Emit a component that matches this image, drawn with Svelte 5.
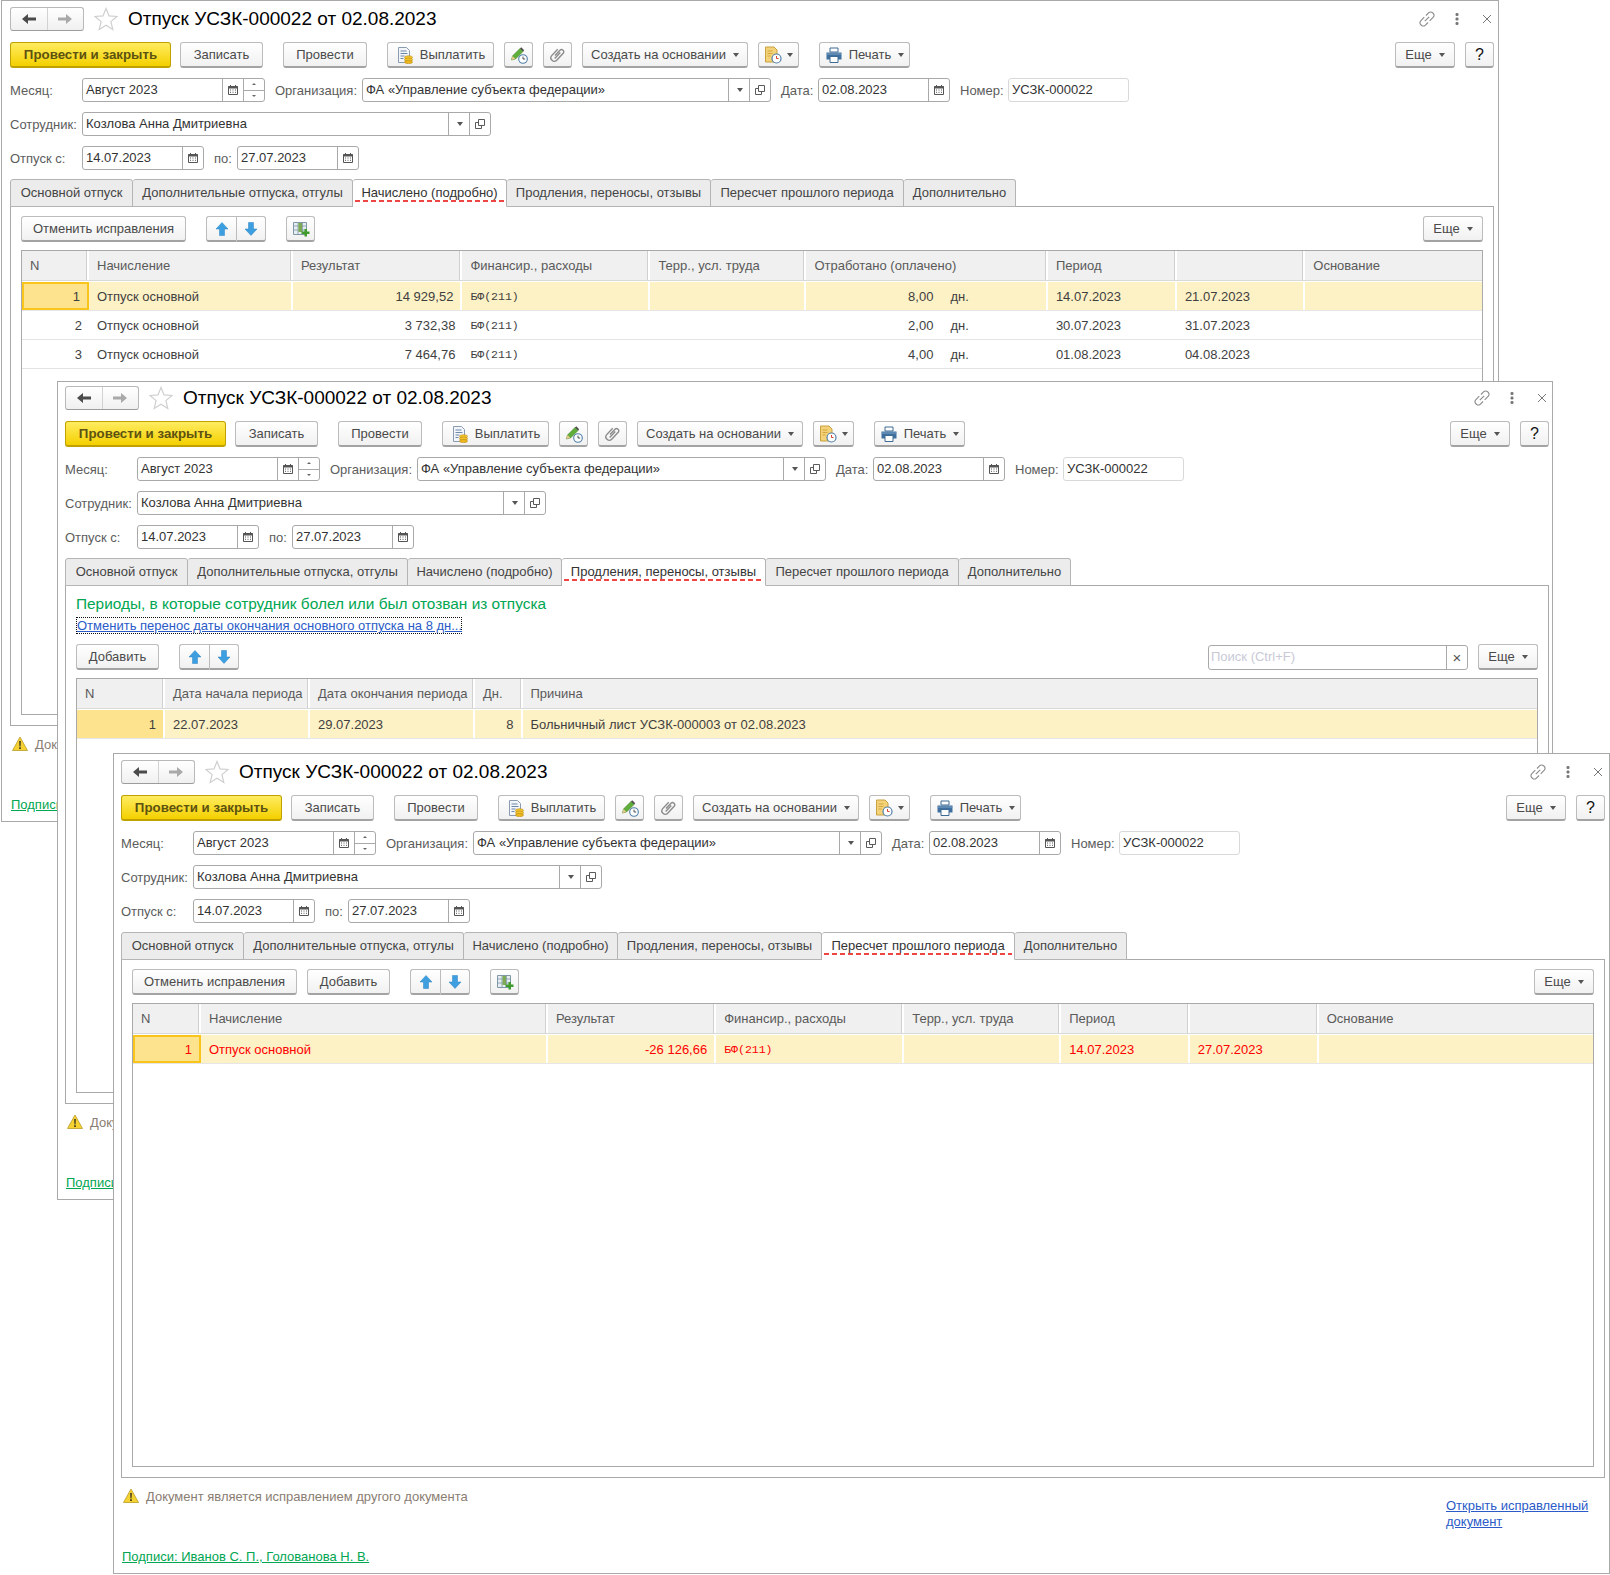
<script>
  const tabs = [
    ["Основной отпуск", 123],
    ["Дополнительные отпуска, отгулы", 220],
    ["Начислено (подробно)", 154],
    ["Продления, переносы, отзывы", 204],
    ["Пересчет прошлого периода", 193],
    ["Дополнительно", 112],
  ];

  const accrualAlign = ["r", "l", "r", "m", "l", "u", "l", "l", "l"];
  const accrualHead = ["N", "Начисление", "Результат", "Финансир., расходы", "Терр., усл. труда", "Отработано (оплачено)", "Период", "", "Основание"];
  const accrualRows = [
    ["1", "Отпуск основной", "14 929,52", "БФ(211)", "", "8,00|дн.", "14.07.2023", "21.07.2023", ""],
    ["2", "Отпуск основной", "3 732,38", "БФ(211)", "", "2,00|дн.", "30.07.2023", "31.07.2023", ""],
    ["3", "Отпуск основной", "7 464,76", "БФ(211)", "", "4,00|дн.", "01.08.2023", "04.08.2023", ""],
  ];

  const periodAlign = ["r", "l", "l", "r", "l"];
  const periodHead = ["N", "Дата начала периода", "Дата окончания периода", "Дн.", "Причина"];
  const periodRows = [["1", "22.07.2023", "29.07.2023", "8", "Больничный лист УСЗК-000003 от 02.08.2023"]];

  const recalcAlign = ["r", "l", "r", "m", "l", "l", "l", "l"];
  const recalcHead = ["N", "Начисление", "Результат", "Финансир., расходы", "Терр., усл. труда", "Период", "", "Основание"];
  const recalcRows = [["1", "Отпуск основной", "-26 126,66", "БФ(211)", "", "14.07.2023", "27.07.2023", ""]];
</script>

{#snippet icon(name, cls = "")}
  <svg class="ic {cls}"><use href="#{name}" /></svg>
{/snippet}

{#snippet caret()}
  <i class="caret"></i>
{/snippet}

{#snippet field(text, cls, buttons = [])}
  <div class="field {cls}">
    <span class="val">{text}</span>
    {#each buttons as b}
      <span class="fbtn">
        {#if b === "cal"}
          {@render icon("i-cal", "s12")}
        {:else if b === "drop"}
          {@render caret()}
        {:else if b === "open"}
          {@render icon("i-open", "s12")}
        {:else if b === "clear"}
          <span class="x">×</span>
        {:else if b === "spin"}
          <span class="spin"><i class="up"></i><i class="dn"></i></span>
        {/if}
      </span>
    {/each}
  </div>
{/snippet}

{#snippet arrows()}
  <div class="btn-pair">
    <button class="btn ib w30">{@render icon("i-up", "s16")}</button>
    <button class="btn ib w30">{@render icon("i-down", "s16")}</button>
  </div>
{/snippet}

{#snippet table(kind, head, rows, align, focus, red = false)}
  <div class="table {kind}" class:red>
    <div class="tr th">
      {#each head as h}
        <div class="cell">{h}</div>
      {/each}
    </div>
    {#each rows as row, ri}
      <div class="tr" class:sel={ri === 0}>
        {#each row as c, ci}
          <div class="cell {align[ci]}" class:num={ci === 0} class:focus={focus && ri === 0 && ci === 0}>
            {#if align[ci] === "u"}
              <span class="qty">{c.split("|")[0]}</span><span class="unit">{c.split("|")[1]}</span>
            {:else}
              {c}
            {/if}
          </div>
        {/each}
      </div>
    {/each}
  </div>
{/snippet}

{#snippet shell(winClass, active, body)}
  <section class="win {winClass}">
    <header class="head">
      <div class="nav">
        <button class="navb">{@render icon("i-back", "s18")}</button>
        <button class="navb">{@render icon("i-fwd", "s18")}</button>
      </div>
      {@render icon("i-star", "star")}
      <h1>Отпуск УСЗК-000022 от 02.08.2023</h1>
      <div class="wctl">
        {@render icon("i-link", "s18")}
        {@render icon("i-dots", "s18")}
        {@render icon("i-close", "s18")}
      </div>
    </header>

    <div class="bar top">
      <div class="grp tight">
        <button class="btn primary b161">Провести и закрыть</button>
        <button class="btn b83">Записать</button>
      </div>
      <button class="btn b84">Провести</button>
      <div class="grp">
        <button class="btn b107">{@render icon("i-pay", "s18")}Выплатить</button>
        <button class="btn ib w29">{@render icon("i-pen", "s18")}</button>
        <button class="btn ib w29">{@render icon("i-clip", "s18")}</button>
        <button class="btn b166">Создать на основании{@render caret()}</button>
        <button class="btn ib b41">{@render icon("i-docclock", "s18")}{@render caret()}</button>
      </div>
      <button class="btn b90">{@render icon("i-print", "s18")}Печать{@render caret()}</button>
      <div class="grp end">
        <button class="btn b60">Еще{@render caret()}</button>
        <button class="btn ib w29 help">?</button>
      </div>
    </div>

    <div class="row">
      <span class="lb l72">Месяц:</span>
      {@render field("Август 2023", "f183", ["cal", "spin"])}
      <span class="lb l86 ml">Организация:</span>
      {@render field("ФА «Управление субъекта федерации»", "f409", ["drop", "open"])}
      <span class="lb l37 ml">Дата:</span>
      {@render field("02.08.2023", "f132", ["cal"])}
      <span class="lb l48 ml">Номер:</span>
      {@render field("УСЗК-000022", "f120 light")}
    </div>
    <div class="row">
      <span class="lb l72">Сотрудник:</span>
      {@render field("Козлова Анна Дмитриевна", "f409", ["drop", "open"])}
    </div>
    <div class="row">
      <span class="lb l72">Отпуск с:</span>
      {@render field("14.07.2023", "f122", ["cal"])}
      <span class="lb l24 ml">по:</span>
      {@render field("27.07.2023", "f122", ["cal"])}
    </div>

    <div class="tabs">
      {#each tabs as [label, w], i}
        <div class="tab" class:on={i === active} style="width:{w}px"><span>{label}</span></div>
      {/each}
    </div>
    <div class="panel">
      {@render body()}
    </div>

    <footer class="foot">
      <div class="foot-left">
        <div class="warn">{@render icon("i-warn", "s16")}<span>Документ является исправлением другого документа</span></div>
        <a class="sign" href="#sign">Подписи: Иванов С. П., Голованова Н. В.</a>
      </div>
      <a class="open-doc" href="#open">Открыть исправленный документ</a>
    </footer>
  </section>
{/snippet}

{#snippet accrued()}
  <div class="bar inner">
    <button class="btn b165">Отменить исправления</button>
    <div class="grp wide">
      {@render arrows()}
      <button class="btn ib w29">{@render icon("i-grid", "s18")}</button>
    </div>
    <button class="btn b60 end">Еще{@render caret()}</button>
  </div>
  {@render table("t1", accrualHead, accrualRows, accrualAlign, true)}
{/snippet}

{#snippet periods()}
  <h2>Периоды, в которые сотрудник болел или был отозван из отпуска</h2>
  <a class="dotted" href="#undo">Отменить перенос даты окончания основного отпуска на 8 дн...</a>
  <div class="bar inner2">
    <button class="btn b83">Добавить</button>
    {@render arrows()}
    <div class="search-wrap">
      <div class="field f260 search">
        <span class="val ph">Поиск (Ctrl+F)</span>
        <span class="fbtn"><span class="x">×</span></span>
      </div>
      <button class="btn b60">Еще{@render caret()}</button>
    </div>
  </div>
  {@render table("t2", periodHead, periodRows, periodAlign, false)}
{/snippet}

{#snippet recalc()}
  <div class="bar inner">
    <div class="grp">
      <button class="btn b165">Отменить исправления</button>
      <button class="btn b83">Добавить</button>
    </div>
    <div class="grp wide">
      {@render arrows()}
      <button class="btn ib w29">{@render icon("i-grid", "s18")}</button>
    </div>
    <button class="btn b60 end">Еще{@render caret()}</button>
  </div>
  {@render table("t3", recalcHead, recalcRows, recalcAlign, true, true)}
{/snippet}

<svg class="defs" aria-hidden="true">
  <defs>
    <symbol id="i-back" viewBox="0 0 18 18"><path d="M2 9l6-5v3.4h8v3.2H8V14z" fill="#4b4b4b" /></symbol>
    <symbol id="i-fwd" viewBox="0 0 18 18"><path d="M16 9l-6-5v3.4H2v3.2h8V14z" fill="#a9a9a9" /></symbol>
    <symbol id="i-star" viewBox="0 0 24 24"><path d="M12 1.5l3 7.4 8 .6-6.100 5.100 1.900 7.800L12 18.200 5.200 22.400l1.900-7.800L1 9.500l8-.6z" fill="#fff" stroke="#cfcfcf" stroke-width="1.200" /></symbol>
    <symbol id="i-link" viewBox="0 0 18 18"><g fill="none" stroke="#8a8a8a" stroke-width="1.100"><path d="M8 5.500l2.800-2.800a2.600 2.600 0 0 1 3.700 0l.8.800a2.600 2.600 0 0 1 0 3.700l-3.600 3.600" /><path d="M10 12.500l-2.800 2.800a2.600 2.600 0 0 1-3.700 0l-.8-.8a2.600 2.600 0 0 1 0-3.700l3.600-3.600" /><path d="M6.800 11.200l4.400-4.400" /></g></symbol>
    <symbol id="i-dots" viewBox="0 0 18 18"><g fill="#777"><rect x="7.500" y="3" width="3" height="3" rx="1.200" /><rect x="7.500" y="7.500" width="3" height="3" rx="1.200" /><rect x="7.500" y="12" width="3" height="3" rx="1.200" /></g></symbol>
    <symbol id="i-close" viewBox="0 0 18 18"><path d="M5 5l8 8M13 5l-8 8" stroke="#777" stroke-width="1" fill="none" /></symbol>
    <symbol id="i-pay" viewBox="0 0 18 18"><path d="M2.500 1.500h8l3 3v12h-11z" fill="#f2f5fa" stroke="#8a9bb2" /><path d="M4.500 5h6M4.500 7.500h7M4.500 10h4M4.500 12.500h3" stroke="#6d87a8" /><ellipse cx="12.500" cy="11.500" rx="4" ry="1.800" fill="#f5c52e" stroke="#b88a10" stroke-width=".6" /><ellipse cx="12.500" cy="13.800" rx="4" ry="1.800" fill="#f5c52e" stroke="#b88a10" stroke-width=".6" /><ellipse cx="12.500" cy="16" rx="4" ry="1.600" fill="#eeb71f" stroke="#b88a10" stroke-width=".6" /></symbol>
    <symbol id="i-pen" viewBox="0 0 18 18"><path d="M1.500 14l1-4L10 2.500l3 3L5.500 13z" fill="#5fae3a" stroke="#3f7f25" stroke-width=".6" /><path d="M1.500 14l1-4 3 3z" fill="#e9c98e" /><path d="M10 2.500l1.200-1.200 3 3L13 5.500z" fill="#4a4a4a" /><circle cx="13" cy="13" r="4.300" fill="#fff" stroke="#4f7fa8" stroke-width="1.100" /><path d="M13 10.600V13h2.200" fill="none" stroke="#3c3c3c" stroke-width=".9" /></symbol>
    <symbol id="i-clip" viewBox="0 0 18 18"><path d="M6 9.500l5-5.300a2.200 2.200 0 0 1 3.200 3l-6.500 7a3.400 3.400 0 0 1-5-4.600l6-6.400M5.700 12.500l5.600-6" fill="none" stroke="#8b8b8b" stroke-width="1.400" /></symbol>
    <symbol id="i-docclock" viewBox="0 0 18 18"><path d="M1.500 1h8.500l3 3v12H1.500z" fill="#f4d27a" stroke="#c9a23f" /><path d="M3.500 5h5M3.500 7.500h5M3.500 10h3" stroke="#d3a63e" /><circle cx="12.500" cy="12.500" r="4.500" fill="#fff" stroke="#4f7fa8" stroke-width="1.200" /><path d="M12.500 10v2.500h2" fill="none" stroke="#d6402f" /></symbol>
    <symbol id="i-print" viewBox="0 0 18 18"><path d="M5 2h8v4H5z" fill="#fff" stroke="#3f6a94" /><path d="M1.500 6.500h15v7h-15z" fill="#3f6f9e" /><path d="M5 10.500h8v6H5z" fill="#fff" stroke="#3f6a94" /><path d="M1.500 8h15" stroke="#7da3c6" /></symbol>
    <symbol id="i-up" viewBox="0 0 16 16"><path d="M8 1.500L14 8h-3.500v6.500h-5V8H2z" fill="#3d9fe0" stroke="#2b83c2" stroke-width=".5" /></symbol>
    <symbol id="i-down" viewBox="0 0 16 16"><path d="M8 14.500L14 8h-3.500V1.500h-5V8H2z" fill="#3d9fe0" stroke="#2b83c2" stroke-width=".5" /></symbol>
    <symbol id="i-grid" viewBox="0 0 18 18"><path d="M1.500 2.500h13v12h-13z" fill="#e6eef2" stroke="#7f97a6" /><path d="M6 2.500v12M10.500 2.500v12M1.500 6h13M1.500 10h13" stroke="#7f97a6" stroke-width=".8" /><path d="M6.500 3h3.500v9H6.500z" fill="#7dab55" /><path d="M11 11h3V8.500h2.500V11H19v2.500h-2.500V16H14v-2.500h-3z" transform="translate(-1.500 .5)" fill="#3f9c2c" /></symbol>
    <symbol id="i-cal" viewBox="0 0 12 12"><path d="M1.500 2.500h9v8h-9z" fill="#fff" stroke="#555" /><path d="M1.500 2h9v2.500h-9z" fill="#555" /><path d="M3.500 1v2M8.500 1v2" stroke="#555" /><path d="M3 6h1M5.500 6h1M8 6h1M3 8.300h1M5.500 8.300h1M8 8.300h1" stroke="#555" /></symbol>
    <symbol id="i-open" viewBox="0 0 12 12"><path d="M4.500 1.500h6v6h-6z" fill="#fff" stroke="#5a5a5a" /><path d="M4.500 4.500h-3v6h6v-3" fill="none" stroke="#5a5a5a" /></symbol>
    <symbol id="i-warn" viewBox="0 0 16 16"><path d="M8 1L15.500 14.500H.5z" fill="#f5d232" stroke="#b99a28" stroke-width=".8" stroke-linejoin="round" /><path d="M7.100 5h1.800l-.3 5.500H7.400zM7.100 11.300h1.800v1.700H7.100z" fill="#4a4020" /></symbol>
  </defs>
</svg>

<main class="desk">
  {@render shell("w1", 2, accrued)}
  {@render shell("w2", 3, periods)}
  {@render shell("w3", 4, recalc)}
</main>

<style>
  :global(body) {
    margin: 0;
    background: #fff;
  }

  .defs {
    position: absolute;
    width: 0;
    height: 0;
  }

  .desk {
    position: relative;
    width: 1610px;
    height: 1575px;
    overflow: hidden;
    font-family: "Liberation Sans", Arial, sans-serif;
    font-size: 13px;
    color: #4a4a4a;
  }

  .win {
    position: absolute;
    width: 1497px;
    height: 821px;
    box-sizing: border-box;
    display: flex;
    flex-direction: column;
    padding: 6px 4px 0 7px;
    background: #fff;
    border: 1px solid #a9a9a9;
  }
  .w1 { left: 1px; top: 0; width: 1498px; height: 822px; padding-left: 8px; }
  .w2 { left: 57px; top: 381px; width: 1496px; height: 819px; padding-top: 4px; padding-right: 3px; }
  .w3 { left: 113px; top: 753px; }

  .ic { display: block; flex: none; }
  .s12 { width: 12px; height: 12px; }
  .s16 { width: 16px; height: 16px; }
  .s18 { width: 18px; height: 18px; }

  .head {
    display: flex;
    align-items: center;
    height: 24px;
    flex: none;
  }
  .nav {
    display: flex;
    width: 74px;
    height: 24px;
    box-sizing: border-box;
    border: 1px solid #b9b9b9;
    border-bottom-color: #9c9c9c;
    border-radius: 3px;
    background: linear-gradient(#fff, #f0f0f0);
  }
  .navb {
    flex: 1;
    display: flex;
    align-items: center;
    justify-content: center;
    padding: 0;
    border: none;
    background: none;
  }
  .navb + .navb { border-left: 1px solid #d2d2d2; }
  .star { width: 24px; height: 24px; margin-left: 10px; }
  h1 {
    margin: 0 0 0 10px;
    font-size: 19px;
    font-weight: 400;
    color: #000;
  }
  .wctl {
    margin-left: auto;
    margin-right: -2px;
    margin-top: -1px;
    display: flex;
    gap: 12px;
  }

  .bar {
    display: flex;
    gap: 20px;
    height: 26px;
    margin-top: 10px;
    flex: none;
  }
  .bar.top { margin-top: 11px; }
  .grp { display: flex; gap: 10px; }
  .grp.tight { gap: 9px; }
  .grp.wide { gap: 20px; }
  .end { margin-left: auto; }

  .btn {
    height: 26px;
    box-sizing: border-box;
    display: flex;
    align-items: center;
    justify-content: center;
    gap: 6px;
    padding: 0;
    font: inherit;
    color: #4a4a4a;
    border: 1px solid #bcbcbc;
    border-bottom: 2px solid #a3a3a3;
    border-radius: 3px;
    background: linear-gradient(#fff, #f1f1f1);
  }
  .primary {
    font-weight: 700;
    font-size: 13.300px;
    color: #5d5210;
    border-color: #bfa200;
    background: linear-gradient(#ffec60, #f4d000);
  }
  .help { color: #111; font-size: 16px; }
  .b41 { width: 41px; gap: 4px; }
  .b60 { width: 60px; }
  .b83 { width: 83px; }
  .b84 { width: 84px; }
  .b90 { width: 91px; }
  .b107 { width: 107px; }
  .b161 { width: 161px; }
  .b165 { width: 165px; }
  .b166 { width: 166px; }
  .w29 { width: 29px; }
  .w30 { width: 30px; }

  .btn-pair { display: flex; }
  .btn-pair .btn:first-child { border-radius: 3px 0 0 3px; border-right: none; }
  .btn-pair .btn:last-child { border-radius: 0 3px 3px 0; }

  .caret {
    display: inline-block;
    width: 0;
    height: 0;
    border: 3px solid transparent;
    border-top: 4px solid #555;
    border-bottom: 0;
    margin-left: 1px;
  }

  .row {
    display: flex;
    align-items: center;
    height: 24px;
    margin-top: 10px;
    flex: none;
  }
  .lb { flex: none; color: #5c5c5c; }
  .ml { margin-left: 10px; }
  .l72 { width: 72px; }
  .l86 { width: 87px; }
  .l37 { width: 37px; }
  .l48 { width: 48px; }
  .l24 { width: 23px; }

  .field {
    display: flex;
    flex: none;
    height: 24px;
    box-sizing: border-box;
    border: 1px solid #a9a9a9;
    border-radius: 3px;
    background: #fff;
  }
  .light { border-color: #d9d9d9; }
  .val {
    flex: 1;
    padding-left: 3px;
    line-height: 22px;
    color: #333;
    white-space: nowrap;
    overflow: hidden;
  }
  .ph { color: #c9c9d6; padding-left: 2px; }
  .fbtn {
    width: 21px;
    box-sizing: border-box;
    flex: none;
    display: flex;
    align-items: center;
    justify-content: center;
    border-left: 1px solid #a9a9a9;
  }
  .f120 { width: 121px; }
  .f122 { width: 122px; }
  .f132 { width: 132px; }
  .f183 { width: 183px; }
  .f260 { width: 260px; }
  .f409 { width: 409px; }
  .x { color: #555; font-size: 15px; }
  .spin {
    display: flex;
    flex-direction: column;
    align-self: stretch;
    flex: 1;
  }
  .spin i {
    flex: 1;
    position: relative;
  }
  .spin .dn { border-top: 1px solid #a9a9a9; }
  .spin i::after {
    content: "";
    position: absolute;
    left: 8px;
    top: 4px;
    border: 2px solid transparent;
  }
  .spin .up::after { border-bottom-color: #666; border-top: 0; }
  .spin .dn::after { border-top-color: #666; border-bottom: 0; }

  .tabs {
    display: flex;
    margin-top: 9px;
    height: 28px;
    flex: none;
    position: relative;
    z-index: 1;
  }
  .tab {
    box-sizing: border-box;
    height: 28px;
    border: 1px solid #b4b4b4;
    border-left-width: 0;
    border-radius: 3px 3px 0 0;
    background: #ececec;
    text-align: center;
    line-height: 26px;
    white-space: nowrap;
    color: #444;
  }
  .tab:first-child { border-left-width: 1px; }
  .tab.on {
    background: #fff;
    border-bottom-color: #fff;
    padding: 0 2px;
    color: #333;
  }
  .tab.on span {
    display: block;
    height: 22px;
    background: repeating-linear-gradient(90deg, #ee4444 0 5px, transparent 5px 8px) bottom / 100% 2px no-repeat;
  }

  .panel {
    flex: 1;
    min-height: 0;
    display: flex;
    flex-direction: column;
    margin-top: -1px;
    padding: 0 10px 10px;
    border: 1px solid #a9a9a9;
  }
  .inner { margin-top: 9px; }
  .inner + .table { margin-top: 8px; }
  .inner2 { margin-top: 10px; align-items: flex-start; }
  .inner2 + .table { margin-top: 8px; }
  .search-wrap {
    margin-left: auto;
    display: flex;
    align-items: center;
    gap: 10px;
  }
  .search { height: 25px; }

  h2 {
    margin: 8px 0 0;
    font-size: 15.400px;
    line-height: 20px;
    font-weight: 400;
    color: #00a651;
  }
  .dotted {
    align-self: flex-start;
    margin-top: 3px;
    width: 386px;
    box-sizing: border-box;
    height: 17px;
    line-height: 15px;
    border: 1px dotted #111;
    color: #2a5bc8;
    white-space: nowrap;
  }

  .table {
    flex: 1;
    min-height: 0;
    border: 1px solid #a9a9a9;
  }
  .tr {
    display: grid;
    box-sizing: border-box;
    height: 29px;
    border-bottom: 1px solid #e3e3e3;
    color: #3f3f3f;
  }
  .t1 .tr { grid-template-columns: 67px 204px 169.400px 188px 156px 241.500px 129px 128.400px 1fr; }
  .t2 .tr { grid-template-columns: 88px 145px 165px 47.500px 1fr; }
  .t3 .tr { grid-template-columns: 68px 346.900px 168.300px 188px 157px 128.500px 129px 1fr; }
  .th {
    height: 30px;
    margin-bottom: 1px;
    border-bottom: 1px solid #d9d9d9;
    background: #f0f0f0;
    color: #5a5a5a;
  }
  .sel { background: #fdf1c6; border-bottom-color: #e6e6e6; }
  .cell {
    box-sizing: border-box;
    padding: 0 7px 0 8px;
    display: flex;
    align-items: center;
    white-space: nowrap;
    overflow: hidden;
    min-width: 0;
  }
  .th .cell { border-right: 2px solid #fff; box-shadow: inset -1px 0 0 #d0d0d0; }
  .sel .cell { border-right: 2px solid #fff; }
  .sel .cell:last-child, .th .cell:last-child { border-right: none; box-shadow: none; }
  .cell.r { justify-content: flex-end; }
  .cell.m { font-family: "Liberation Mono", monospace; font-size: 11.500px; }
  .qty { width: 119px; text-align: right; }
  .unit { margin-left: 17px; }
  .sel .num { background: #fde38e; }
  .focus { border: 2px solid #f9c51a !important; }
  .red .tr:not(.th) { color: #f00; }

  .foot {
    flex: none;
    height: 95px;
    box-sizing: border-box;
    display: flex;
    justify-content: space-between;
    padding: 10px 5px 9px 1px;
  }
  .foot-left {
    display: flex;
    flex-direction: column;
    justify-content: space-between;
  }
  .warn {
    display: flex;
    align-items: center;
    gap: 7px;
    margin-left: 1px;
    color: #8a7d72;
  }
  .sign { color: #00a651; }
  .open-doc {
    width: 154px;
    margin-top: 10px;
    line-height: 16px;
    color: #2a5bc8;
  }
</style>
